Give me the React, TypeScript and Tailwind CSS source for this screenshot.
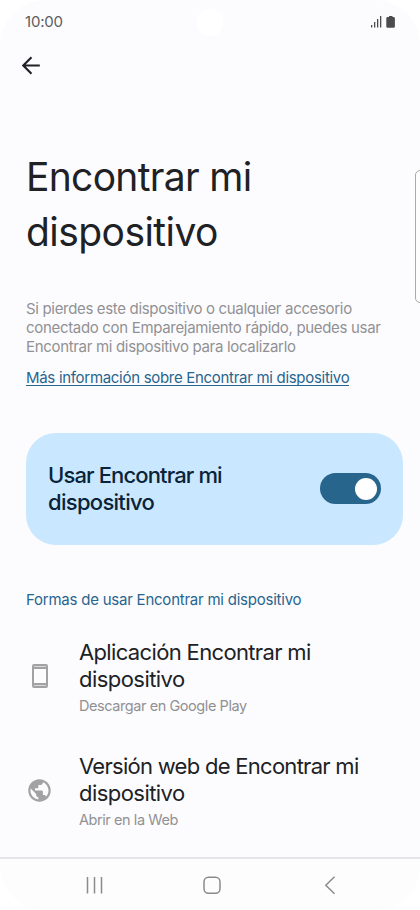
import type { ReactNode } from "react";
import { MdPublic } from "react-icons/md";

const StatusBar = () => (
  <div className="relative flex h-11 shrink-0 items-center justify-between pl-[25px] pr-6">
    <span className="text-[15px] leading-5 tracking-[-0.2px] text-[#5c5c5e]">10:00</span>
    <div className="absolute left-[197px] top-[9px] h-[27px] w-[26px] rounded-full bg-white" />
    <svg width="26" height="14" viewBox="0 0 26 14" fill="#4c4c4e">
      <rect x="1" y="10" width="1.300" height="2.500" />
      <rect x="4" y="7" width="1.300" height="5.500" />
      <rect x="7" y="4" width="1.300" height="8.500" />
      <rect x="10" y="1" width="1.300" height="11.500" />
      <path d="M19 1h3.500v1h1a1.400 1.400 0 0 1 1.400 1.400v8a1.400 1.400 0 0 1-1.400 1.400h-5.800a1.400 1.400 0 0 1-1.400-1.400v-8A1.400 1.400 0 0 1 17.700 2H19z" />
    </svg>
  </div>
);

const PhoneIcon = () => (
  <svg width="16" height="24" viewBox="0 0 16 24" fill="none" stroke="#a2a2a4">
    <rect x="1" y="1" width="14" height="22" rx="1" strokeWidth="2" />
    <path d="M1 4h14M1 20h14" strokeWidth="2" />
    <path d="M1 2.500h14M1 21.500h14" strokeWidth="1" strokeOpacity="0.4" />
  </svg>
);

type OptionProps = {
  icon: ReactNode;
  title: ReactNode;
  subtitle: ReactNode;
};

const Option = ({ icon, title, subtitle }: OptionProps) => (
  <div className="flex h-[114px] items-start">
    <div className="mt-6 flex h-[27px] w-[79px] shrink-0 items-center justify-center">{icon}</div>
    <div>
      <h2 className="whitespace-nowrap text-[22px] leading-[27px] text-[#202124]">{title}</h2>
      <p className="mt-[3px] whitespace-nowrap text-[14.5px] leading-[20px] text-[#919193]">{subtitle}</p>
    </div>
  </div>
);

const NavBar = () => (
  <nav className="h-[53px] shrink-0 rounded-b-[45px] border-t-2 border-[#e6e6e8] bg-[#fdfdfd]">
    <svg width="420" height="51" viewBox="0 0 420 51" fill="none" stroke="#8b8b8d" strokeWidth="1.500">
      <path d="M87.500 18v16.500M94.500 18v16.500M101.500 18v16.500" />
      <rect x="204" y="18.300" width="16" height="16" rx="4.500" />
      <path d="M334.500 17.800l-8.700 8.500 8.700 8.500" />
    </svg>
  </nav>
);

const App = () => {
  return (
    <div className="h-[910px] w-[420px] overflow-hidden bg-white font-['Inter',sans-serif]">
      <div className="relative flex h-full flex-col rounded-[45px] bg-[#fcfcff]">
        <StatusBar />
        <svg className="ml-[22px] mt-3 block shrink-0" width="19" height="19" viewBox="0 0 19 19" fill="none" stroke="#202124" strokeWidth="2.100">
          <path d="M17.800 9.500H1.500M9.500 1.300L1.300 9.500l8.200 8.200" />
        </svg>

        <div className="absolute -right-2 top-[170px] h-[133px] w-[13px] rounded-[5px] border border-[#a9a9ab] bg-[#fdfdfd]" />

        <h1 className="ml-[26px] mt-[74px] whitespace-nowrap text-[39px] leading-[55px] text-[#202124]">
          <span className="block tracking-[-0.7px]">Encontrar mi</span>
          <span className="block tracking-[-0.55px]">dispositivo</span>
        </h1>

        <p className="ml-[26px] mt-10 whitespace-nowrap text-[15px] leading-[19px] text-[#919193]">
          <span className="block tracking-[-0.33px]">Si pierdes este dispositivo o cualquier accesorio</span>
          <span className="block tracking-[-0.32px]">conectado con Emparejamiento rápido, puedes usar</span>
          <span className="block tracking-[-0.32px]">Encontrar mi dispositivo para localizarlo</span>
        </p>
        <a className="ml-[26px] mt-[13px] h-[17px] self-start whitespace-nowrap border-b border-[#28658d] text-[15px] leading-[18px] tracking-[-0.3px] text-[#28658d]">
          Más información sobre Encontrar mi dispositivo
        </a>

        <div className="ml-[26px] mt-[46.5px] flex h-28 w-[377px] shrink-0 items-center justify-between rounded-[30px] bg-[#c9e7fe] px-[22px]">
          <span className="whitespace-nowrap text-[22px] font-medium leading-[27px] text-[#0a2338]">
            <span className="block tracking-[-0.87px]">Usar Encontrar mi</span>
            <span className="block tracking-[-0.7px]">dispositivo</span>
          </span>
          <div className="flex h-[31px] w-[61px] items-center justify-end rounded-full bg-[#28658d] pr-1">
            <div className="h-[22px] w-[22px] rounded-full bg-white" />
          </div>
        </div>

        <h3 className="ml-[26px] mt-[45px] whitespace-nowrap text-[15px] leading-5 tracking-[-0.23px] text-[#28658d]">
          Formas de usar Encontrar mi dispositivo
        </h3>

        <div className="mt-[29px] min-h-0 grow basis-0">
          <Option
            icon={<PhoneIcon />}
            title={
              <>
                <span className="block tracking-[-0.65px]">Aplicación Encontrar mi</span>
                <span className="block tracking-[-0.55px]">dispositivo</span>
              </>
            }
            subtitle={<span className="tracking-[-0.43px]">Descargar en Google Play</span>}
          />
          <Option
            icon={<MdPublic size={27} color="#a2a2a4" />}
            title={
              <>
                <span className="block tracking-[-0.72px]">Versión web de Encontrar mi</span>
                <span className="block tracking-[-0.55px]">dispositivo</span>
              </>
            }
            subtitle={<span className="tracking-[-0.43px]">Abrir en la Web</span>}
          />
        </div>
        <NavBar />
      </div>
    </div>
  );
};

export default App;
